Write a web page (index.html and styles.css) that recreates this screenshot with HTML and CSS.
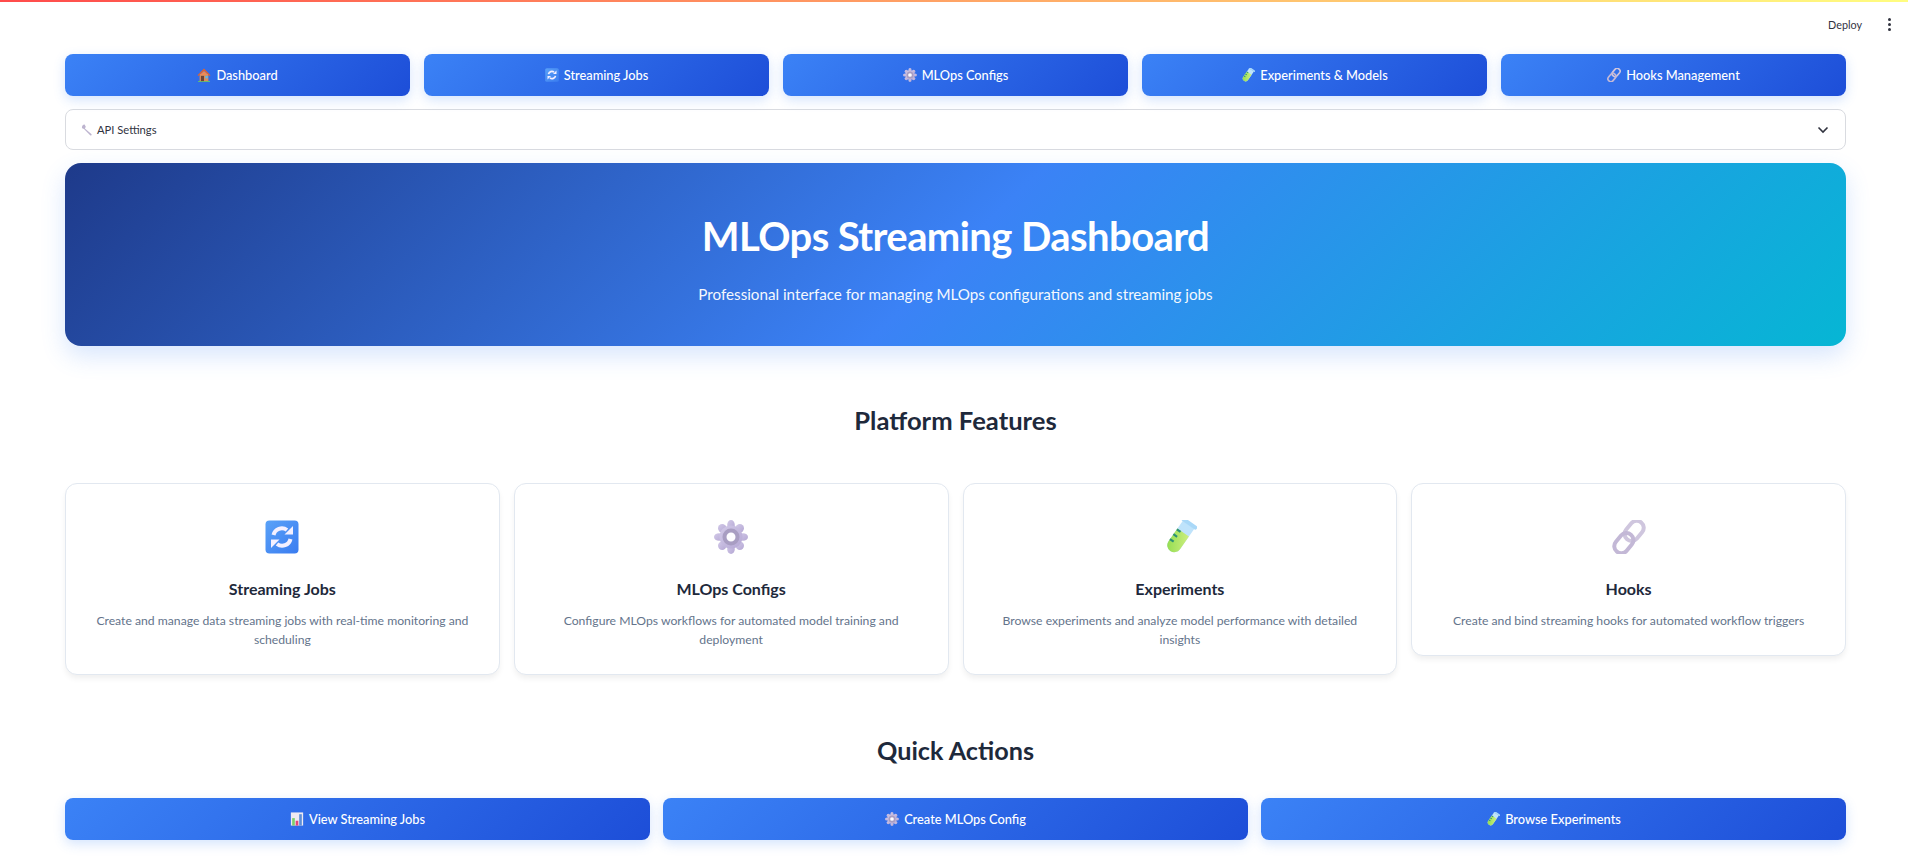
FILE: index.html
```html
<!DOCTYPE html>
<html lang="en">
<head>
<meta charset="utf-8">
<title>MLOps Streaming Dashboard</title>
<link rel="stylesheet" href="styles.css">
</head>
<body>
<svg class="defs" aria-hidden="true">
  <defs>
    <linearGradient id="gBlue" x1="0" y1="0" x2="1" y2="1"><stop offset="0" stop-color="#5aa2f8"/><stop offset="1" stop-color="#3a7cf0"/></linearGradient>
    <linearGradient id="gGear" x1="0" y1="0" x2="1" y2="1"><stop offset="0" stop-color="#d2c9e8"/><stop offset="1" stop-color="#b5a8d4"/></linearGradient>
    <linearGradient id="gTube" x1="0" y1="1" x2="1" y2="0"><stop offset="0" stop-color="#8fdc4e"/><stop offset="1" stop-color="#cdee7e"/></linearGradient>
    <symbol id="i-sync" viewBox="0 0 34 34">
      <rect x="0.5" y="0.5" width="33" height="33" rx="4" fill="url(#gBlue)"/>
      <path d="M8.500 15a8.500 8.500 0 0 1 13.500-5" fill="none" stroke="#f4f0ff" stroke-width="4"/>
      <path d="M19.500 14.500h8.500V6z" fill="#f4f0ff"/>
      <path d="M25.500 19a8.500 8.500 0 0 1-13.500 5" fill="none" stroke="#f4f0ff" stroke-width="4"/>
      <path d="M14.500 19.500H6V28z" fill="#f4f0ff"/>
    </symbol>
    <symbol id="i-gear" viewBox="0 0 34 34">
      <g fill="url(#gGear)">
        <ellipse cx="17" cy="5" rx="3.800" ry="5"/><ellipse cx="17" cy="29" rx="3.800" ry="5"/>
        <ellipse cx="5" cy="17" rx="5" ry="3.800"/><ellipse cx="29" cy="17" rx="5" ry="3.800"/>
        <circle cx="8.200" cy="8.200" r="4.200"/><circle cx="25.800" cy="8.200" r="4.200"/><circle cx="8.200" cy="25.800" r="4.200"/><circle cx="25.800" cy="25.800" r="4.200"/>
        <circle cx="17" cy="17" r="11.500"/>
      </g>
      <circle cx="17" cy="17" r="6.500" fill="#fdfcff" stroke="#a89dc2" stroke-width="4"/>
    </symbol>
    <symbol id="i-tube" viewBox="0 0 34 34">
      <g transform="rotate(35 17 17)">
        <path d="M10 2h14v25a7 7 0 0 1-14 0z" fill="#bfe3fb"/>
        <path d="M10 11.500h14V27a7 7 0 0 1-14 0z" fill="url(#gTube)"/>
        <rect x="8" y="-1.500" width="18" height="4" rx="1.800" fill="#a9d8f8"/>
        <path d="M10 12.500h4.500M10 18.500h4.500M10 24.500h4.500" stroke="#2b9077" stroke-width="2.200"/>
      </g>
    </symbol>
    <symbol id="i-link" viewBox="0 0 34 34">
      <g fill="none" stroke-width="4" transform="rotate(40 17 17)">
        <rect x="10" y="-2" width="14" height="22" rx="7" stroke="#cfc6de"/>
        <rect x="10" y="14" width="14" height="22" rx="7" stroke="#c3b8d6"/>
      </g>
    </symbol>
    <symbol id="i-wrench" viewBox="0 0 16 16">
      <path d="M4.800 0.800L6.400 3.600 5.200 6 13.800 13.200a1.200 1.200 0 0 1-1.600 1.800L4 6.500 1.600 5.800C0.500 3.800 2.500 0.500 4.800 0.800z" fill="#bdb4cf"/>
    </symbol>
    <symbol id="i-house" viewBox="0 0 16 16">
      <path d="M1.200 14.800h13.600V16H1.200z" fill="#5bbf76"/>
      <path d="M3 7h10v8H3z" fill="#d98d5c"/>
      <path d="M8 .5L.6 8.200l1 .9L8 3.200l6.400 5.900 1-.9z" fill="#e2622f"/>
      <path d="M3 8l5-4.500L13 8z" fill="#ee8a55"/>
      <rect x="4.500" y="9" width="3.500" height="6" fill="#6d4336"/>
      <rect x="9.500" y="9" width="2.800" height="2.800" fill="#5cb8e8"/>
    </symbol>
    <symbol id="i-chart" viewBox="0 0 16 16">
      <rect x="1" y="0.500" width="14" height="15" fill="#eeeaf2"/>
      <rect x="2.500" y="7" width="3" height="8.500" fill="#7ccf6b"/>
      <rect x="6.500" y="10" width="3" height="5.500" fill="#e2457a"/>
      <rect x="10.500" y="2.500" width="3" height="13" fill="#5b8fd8"/>
    </symbol>
    <symbol id="i-chev" viewBox="0 0 16 16">
      <path d="M3.500 5.500L8 10l4.500-4.500" fill="none" stroke="#31333f" stroke-width="1.600"/>
    </symbol>
  </defs>
</svg>

<div class="decoration"></div>
<header class="toolbar">
  <span class="deploy">Deploy</span>
  <span class="kebab"><i></i><i></i><i></i></span>
</header>

<main class="main">
  <nav class="nav-row">
    <button class="btn"><svg class="em"><use href="#i-house"/></svg>Dashboard</button>
    <button class="btn"><svg class="em"><use href="#i-sync"/></svg>Streaming Jobs</button>
    <button class="btn"><svg class="em"><use href="#i-gear"/></svg>MLOps Configs</button>
    <button class="btn"><svg class="em"><use href="#i-tube"/></svg>Experiments &amp; Models</button>
    <button class="btn"><svg class="em"><use href="#i-link"/></svg>Hooks Management</button>
  </nav>

  <section class="expander">
    <span class="exp-label"><svg class="em-sm"><use href="#i-wrench"/></svg>API Settings</span>
    <svg class="chev"><use href="#i-chev"/></svg>
  </section>

  <section class="hero">
    <h1>MLOps Streaming Dashboard</h1>
    <p>Professional interface for managing MLOps configurations and streaming jobs</p>
  </section>

  <h2 class="features-title">Platform Features</h2>

  <section class="cards">
    <article class="card">
      <svg class="card-icon"><use href="#i-sync"/></svg>
      <h3>Streaming Jobs</h3>
      <p>Create and manage data streaming jobs with real-time monitoring and scheduling</p>
    </article>
    <article class="card">
      <svg class="card-icon"><use href="#i-gear"/></svg>
      <h3>MLOps Configs</h3>
      <p>Configure MLOps workflows for automated model training and deployment</p>
    </article>
    <article class="card">
      <svg class="card-icon"><use href="#i-tube"/></svg>
      <h3>Experiments</h3>
      <p>Browse experiments and analyze model performance with detailed insights</p>
    </article>
    <article class="card">
      <svg class="card-icon"><use href="#i-link"/></svg>
      <h3>Hooks</h3>
      <p>Create and bind streaming hooks for automated workflow triggers</p>
    </article>
  </section>

  <h2 class="actions-title">Quick Actions</h2>

  <section class="actions-row">
    <button class="btn"><svg class="em"><use href="#i-chart"/></svg>View Streaming Jobs</button>
    <button class="btn"><svg class="em"><use href="#i-gear"/></svg>Create MLOps Config</button>
    <button class="btn"><svg class="em"><use href="#i-tube"/></svg>Browse Experiments</button>
  </section>
</main>
</body>
</html>
```

FILE: styles.css
```css
* { box-sizing: border-box; }
html, body { margin: 0; height: 867px; overflow: hidden; }
body {
  background: #fff;
  color: #1e293b;
  font-family: "Lato", "Noto Sans", sans-serif;
}
.defs { position: absolute; width: 0; height: 0; }
.decoration {
  height: 2px;
  background: linear-gradient(90deg, #ff4b4b, #fffd80);
}
.toolbar {
  height: 52px;
  padding: 0 16px 8px 0;
  display: flex;
  align-items: center;
  justify-content: flex-end;
}
.deploy { font-size: 10.8px; color: #31333f; margin-right: 24px; }
.kebab { display: flex; flex-direction: column; gap: 2px; width: 6px; align-items: center; }
.kebab i { width: 3px; height: 3px; border-radius: 50%; background: #31333f; }

.main { padding: 0 62px 0 65px; }

.nav-row, .actions-row { display: grid; }
.nav-row { grid-template-columns: repeat(5, 1fr); gap: 14px; }
.actions-row { grid-template-columns: repeat(3, 1fr); gap: 13px; }

.btn {
  height: 42px;
  border: 0;
  border-radius: 8px;
  background: linear-gradient(135deg, #3b82f6, #1d4ed8);
  box-shadow: 0 4px 12px rgba(59, 130, 246, 0.22);
  color: #fff;
  font: 500 12.8px/1 "Lato", "Noto Sans", sans-serif;
  display: flex;
  align-items: center;
  justify-content: center;
  gap: 5px;
  padding: 0;
}
.em { width: 14px; height: 14px; flex: none; }
.em-sm { width: 12px; height: 12px; flex: none; }

.expander {
  margin-top: 13px;
  height: 41px;
  border: 1px solid #d9dbe0;
  border-radius: 8px;
  background: #fff;
  display: flex;
  align-items: center;
  justify-content: space-between;
  padding: 0 14px 0 15px;
}
.exp-label { display: flex; align-items: center; gap: 4px; font-size: 11.2px; color: #31333f; }
.chev { width: 16px; height: 16px; }

.hero {
  margin-top: 13px;
  height: 183px;
  border-radius: 16px;
  background: linear-gradient(135deg, #1e3a8a 0%, #3b82f6 50%, #06b6d4 100%);
  box-shadow: 0 10px 25px rgba(59, 130, 246, 0.2);
  color: #fff;
  text-align: center;
  padding-top: 49px;
}
.hero h1 { margin: 0; font-size: 40px; line-height: 48px; font-weight: 700; letter-spacing: -0.58px; }
.hero p { margin: 22px 0 0; font-size: 15.2px; line-height: 24px; opacity: 0.95; }

.features-title, .actions-title {
  margin: 0;
  text-align: center;
  font-weight: 700;
  line-height: 36px;
  color: #1e293b;
}
.features-title { margin-top: 56px; font-size: 25.6px; }
.actions-title { margin-top: 57px; font-size: 25.2px; }

.cards {
  margin-top: 45px;
  display: grid;
  grid-template-columns: repeat(4, 1fr);
  gap: 14px;
  align-items: start;
}
.card {
  background: #fff;
  border: 1px solid #e2e8f0;
  border-radius: 12px;
  box-shadow: 0 4px 6px -1px rgba(0, 0, 0, 0.07);
  padding: 36px 24px 25px;
  text-align: center;
}
.card-icon { display: block; width: 34px; height: 34px; margin: 0 auto; }
.card h3 { margin: 23px 0 0; font-size: 16px; line-height: 24px; font-weight: 700; color: #1e293b; }
.card p { margin: 10px 0 0; font-size: 12.2px; line-height: 19px; color: #64748b; }

.actions-row { margin-top: 30px; }
```
